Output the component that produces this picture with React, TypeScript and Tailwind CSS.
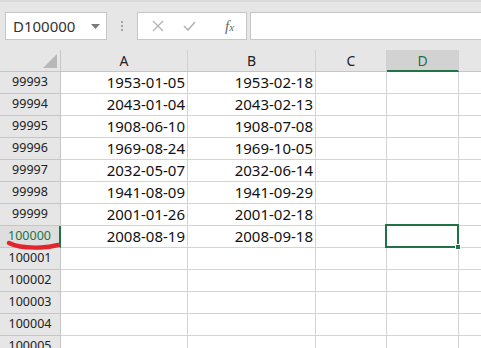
import React from 'react';

const rows: [string, string, string][] = [
  ['99993', '1953-01-05', '1953-02-18'],
  ['99994', '2043-01-04', '2043-02-13'],
  ['99995', '1908-06-10', '1908-07-08'],
  ['99996', '1969-08-24', '1969-10-05'],
  ['99997', '2032-05-07', '2032-06-14'],
  ['99998', '1941-08-09', '1941-09-29'],
  ['99999', '2001-01-26', '2001-02-18'],
  ['100000', '2008-08-19', '2008-09-18'],
  ['100001', '', ''],
  ['100002', '', ''],
  ['100003', '', ''],
  ['100004', '', ''],
  ['100005', '', ''],
];

const font = { fontFamily: '"Segoe UI", "Noto Sans", "Open Sans", sans-serif' };

function Toolbar() {
  return (
    <div className="flex h-[50px] items-start border-t-2 border-[#d9d9d9] bg-[#e6e6e6] pt-[10px]">
      <div className="ml-[5px] flex h-[28px] w-[102px] items-center justify-between border border-[#c6c6c6] bg-white pl-[7px] pr-[6px]">
        <span className="text-[15px] text-[#333]">D100000</span>
        <svg width="9" height="5" viewBox="0 0 9 5">
          <path d="M0 0h9L4.5 5z" fill="#7a7a7a" />
        </svg>
      </div>
      <div className="ml-[14px] mt-[9px] flex flex-col gap-[2px]">
        <span className="h-[2px] w-[2px] bg-[#a6a6a6]" />
        <span className="h-[2px] w-[2px] bg-[#a6a6a6]" />
        <span className="h-[2px] w-[2px] bg-[#a6a6a6]" />
      </div>
      <div className="ml-[14px] flex h-[28px] w-[110px] items-center border border-[#c6c6c6] bg-white">
        <svg className="ml-[14px]" width="12" height="12" viewBox="0 0 12 12">
          <path d="M1 1l10 10M11 1L1 11" stroke="#b3b3b3" strokeWidth="1.3" />
        </svg>
        <svg className="ml-[19px]" width="13" height="10" viewBox="0 0 13 10">
          <path d="M1 5l4 4 7-8" stroke="#b3b3b3" strokeWidth="1.6" fill="none" />
        </svg>
        <span
          className="ml-[29px] text-[15px] italic text-[#666]"
          style={{ fontFamily: '"Liberation Serif", serif' }}
        >
          f<span className="text-[11px]">x</span>
        </span>
      </div>
      <div className="ml-[3px] h-[28px] flex-1 border border-r-0 border-[#c6c6c6] bg-white" />
    </div>
  );
}

export default function App() {
  return (
    <div className="relative h-[348px] w-[481px] overflow-hidden bg-white" style={font}>
      <Toolbar />
      <div className="flex h-[22px] border-b border-[#c6c6c6] bg-[#e6e6e6] text-[14px] text-[#222]">
        <div className="relative w-[61px] border-r border-[#c6c6c6]">
          <svg className="absolute bottom-[3px] right-[3px]" width="14" height="14" viewBox="0 0 14 14">
            <path d="M14 0v14H0z" fill="#b8b8b8" />
          </svg>
        </div>
        <div className="flex w-[127px] items-center justify-center border-r border-[#d0d0d0]">A</div>
        <div className="flex w-[128px] items-center justify-center border-r border-[#d0d0d0]">B</div>
        <div className="flex w-[71px] items-center justify-center border-r border-[#d0d0d0]">C</div>
        <div className="-mb-px flex w-[72px] items-center justify-center border-b-2 border-r border-b-[#217346] border-r-[#d0d0d0] bg-[#d2d2d2] text-[#217346]">
          D
        </div>
        <div className="flex-1" />
      </div>
      {rows.map(([n, a, b]) => {
        const sel = n === '100000';
        return (
          <div key={n} className="flex h-[22px] text-[15px] text-[#111]">
            <div
              className={
                sel
                  ? 'flex w-[61px] items-center justify-center border-b border-r-2 border-b-[#c6c6c6] border-r-[#217346] bg-[#dedede] text-[12.5px] text-[#217346]'
                  : 'flex w-[61px] items-center justify-center border-b border-r border-[#c6c6c6] bg-[#e6e6e6] text-[12.5px] text-[#222]'
              }
            >
              {n}
            </div>
            <div className="flex w-[127px] items-center justify-end border-b border-r border-[#d4d4d4] pr-[2px]">{a}</div>
            <div className="flex w-[128px] items-center justify-end border-b border-r border-[#d4d4d4] pr-[2px]">{b}</div>
            <div className="w-[71px] border-b border-r border-[#d4d4d4]" />
            <div className="w-[72px] border-b border-r border-[#d4d4d4]" />
            <div className="flex-1 border-b border-[#d4d4d4]" />
          </div>
        );
      })}
      {/* active cell */}
      <div className="absolute left-[385px] top-[224px] h-[24px] w-[74px] border-2 border-[#217346]" />
      <div className="absolute left-[455px] top-[244px] h-[6px] w-[6px] border border-white bg-[#217346]" />
      {/* red marker stroke */}
      <svg className="absolute left-[4px] top-[237px]" width="58" height="16" viewBox="0 0 58 16">
        <path d="M5 6c8 4 20 5 32 4.5 8-.3 13-1.5 17-2.5" stroke="#e3262b" strokeWidth="4.5" fill="none" strokeLinecap="round" />
      </svg>
    </div>
  );
}
